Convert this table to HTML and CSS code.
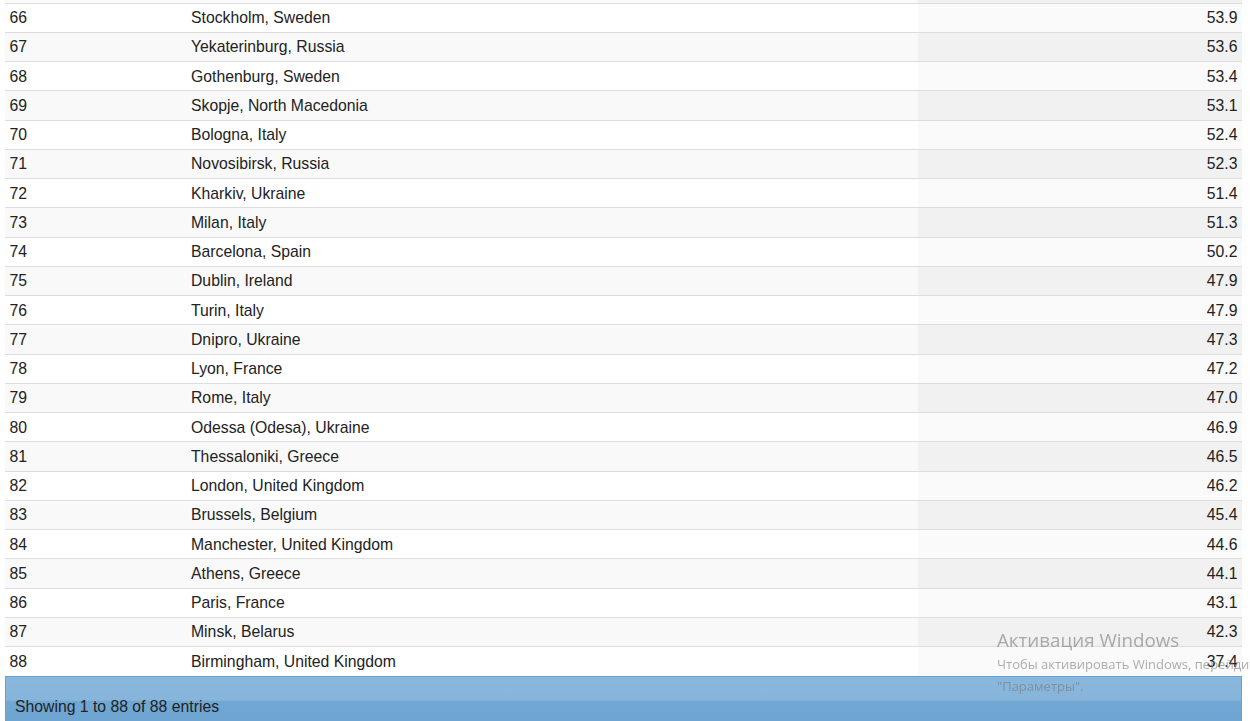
FILE: index.html
```html
<!DOCTYPE html>
<html lang="en">
<head>
<meta charset="utf-8">
<title>Cities</title>
<link rel="stylesheet" href="styles.css">
</head>
<body>
<div class="wrap">
  <table class="data">
    <colgroup><col class="c1"><col class="c2"><col class="c3"></colgroup>
    <tbody>
      <tr class="even stub"><td></td><td></td><td class="sorted"></td></tr>
      <tr class="odd"><td>66</td><td>Stockholm, Sweden</td><td class="sorted">53.9</td></tr>
      <tr class="even"><td>67</td><td>Yekaterinburg, Russia</td><td class="sorted">53.6</td></tr>
      <tr class="odd"><td>68</td><td>Gothenburg, Sweden</td><td class="sorted">53.4</td></tr>
      <tr class="even"><td>69</td><td>Skopje, North Macedonia</td><td class="sorted">53.1</td></tr>
      <tr class="odd"><td>70</td><td>Bologna, Italy</td><td class="sorted">52.4</td></tr>
      <tr class="even"><td>71</td><td>Novosibirsk, Russia</td><td class="sorted">52.3</td></tr>
      <tr class="odd"><td>72</td><td>Kharkiv, Ukraine</td><td class="sorted">51.4</td></tr>
      <tr class="even"><td>73</td><td>Milan, Italy</td><td class="sorted">51.3</td></tr>
      <tr class="odd"><td>74</td><td>Barcelona, Spain</td><td class="sorted">50.2</td></tr>
      <tr class="even"><td>75</td><td>Dublin, Ireland</td><td class="sorted">47.9</td></tr>
      <tr class="odd"><td>76</td><td>Turin, Italy</td><td class="sorted">47.9</td></tr>
      <tr class="even"><td>77</td><td>Dnipro, Ukraine</td><td class="sorted">47.3</td></tr>
      <tr class="odd"><td>78</td><td>Lyon, France</td><td class="sorted">47.2</td></tr>
      <tr class="even"><td>79</td><td>Rome, Italy</td><td class="sorted">47.0</td></tr>
      <tr class="odd"><td>80</td><td>Odessa (Odesa), Ukraine</td><td class="sorted">46.9</td></tr>
      <tr class="even"><td>81</td><td>Thessaloniki, Greece</td><td class="sorted">46.5</td></tr>
      <tr class="odd"><td>82</td><td>London, United Kingdom</td><td class="sorted">46.2</td></tr>
      <tr class="even"><td>83</td><td>Brussels, Belgium</td><td class="sorted">45.4</td></tr>
      <tr class="odd"><td>84</td><td>Manchester, United Kingdom</td><td class="sorted">44.6</td></tr>
      <tr class="even"><td>85</td><td>Athens, Greece</td><td class="sorted">44.1</td></tr>
      <tr class="odd"><td>86</td><td>Paris, France</td><td class="sorted">43.1</td></tr>
      <tr class="even"><td>87</td><td>Minsk, Belarus</td><td class="sorted">42.3</td></tr>
      <tr class="odd"><td>88</td><td>Birmingham, United Kingdom</td><td class="sorted">37.4</td></tr>
    </tbody>
  </table>
  <div class="footer">
    <div class="info">Showing 1 to 88 of 88 entries</div>
  </div>
</div>
<div class="watermark">
  <div class="wm-title">Активация Windows</div>
  <div class="wm-text">Чтобы активировать Windows, перейдите в раздел<br>"Параметры".</div>
</div>
</body>
</html>
```
FILE: styles.css
```css
html, body {
  margin: 0;
  padding: 0;
  background: #ffffff;
  overflow: hidden;
}
body {
  font-family: "Liberation Sans", Arial, sans-serif;
  font-size: 15.75px;
  color: #222222;
}
.wrap {
  width: 1237px;
  margin-left: 5px;
}
.data {
  width: 100%;
  border-collapse: collapse;
  table-layout: fixed;
}
.c1 { width: 181.5px; }
.c2 { width: 731.5px; }
.c3 { width: 324px; }
.data td {
  height: 29.26px;
  padding: 1px 4.5px 0;
  border-top: 1px solid #dddddd;
  box-sizing: border-box;
  vertical-align: middle;
  line-height: 18px;
  white-space: nowrap;
}
.data td.sorted { text-align: right; }
.data tr.stub td {
  height: 3px;
  border-top: none;
  padding: 0;
}
.data tr.odd td { background: #ffffff; }
.data tr.odd td.sorted { background: #fafafa; }
.data tr.even td { background: #f9f9f9; }
.data tr.even td.sorted { background: #f1f1f1; }
.footer {
  height: 60px;
  border: 1px solid #5fa2dd;
  box-sizing: border-box;
  background: linear-gradient(to bottom, #8ab7dc 0%, #87b4da 40%, #70a7d3 42%, #6ca4d1 100%);
  padding: 20px 9px 0;
}
.info {
  color: #222222;
  line-height: 20px;
}
.watermark {
  position: fixed;
  left: 997px;
  top: 627px;
  font-family: "Open Sans", "Noto Sans", sans-serif;
  color: rgba(120, 120, 120, 0.6);
  white-space: nowrap;
}
.wm-title {
  font-size: 18.75px;
  line-height: 26px;
}
.wm-text {
  font-size: 13px;
  line-height: 22px;
}
```
